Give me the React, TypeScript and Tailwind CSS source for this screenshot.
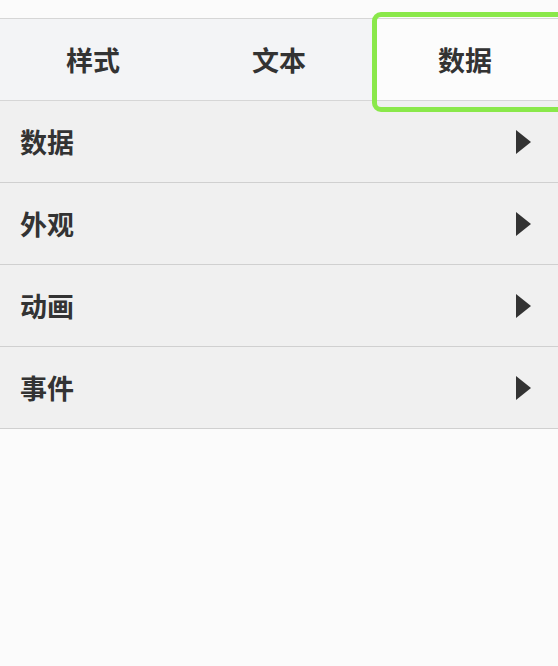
import { useState } from 'react'

const tabs = ['样式', '文本', '数据']
const sections = ['数据', '外观', '动画', '事件']

function Caret() {
  return (
    <svg width="15" height="24" viewBox="0 0 15 24" className="fill-[#333]">
      <path d="M0 0 L15 12 L0 24 Z" />
    </svg>
  )
}

export default function App() {
  const [active, setActive] = useState(2)

  return (
    <div
      className="min-h-[666px] overflow-hidden bg-[#fbfbfb] pt-[18px] text-[#333]"
      style={{ fontFamily: '"Noto Sans CJK SC", "Noto Sans", sans-serif' }}
    >
      <div className="flex h-[83px] border-y border-[#d6d6d6] bg-[#f3f4f6]">
        {tabs.map((t, i) => (
          <button
            key={t}
            onClick={() => setActive(i)}
            className={`relative flex flex-1 items-center justify-center pb-px text-[27px] leading-none font-bold ${
              i === active ? 'bg-[#fcfcfc]' : ''
            }`}
          >
            {t}
            {i === active && (
              <span className="pointer-events-none absolute -top-[7px] -bottom-[12px] left-0 -right-4 rounded-[9px] border-[5px] border-[#8ae84a]" />
            )}
          </button>
        ))}
      </div>

      {sections.map((s) => (
        <div
          key={s}
          className="flex h-[82px] items-center justify-between border-b border-[#d0d0d0] bg-[#f0f0f0] pl-5 pr-[27px]"
        >
          <span className="pb-px text-[27px] leading-none font-bold">{s}</span>
          <Caret />
        </div>
      ))}
    </div>
  )
}
